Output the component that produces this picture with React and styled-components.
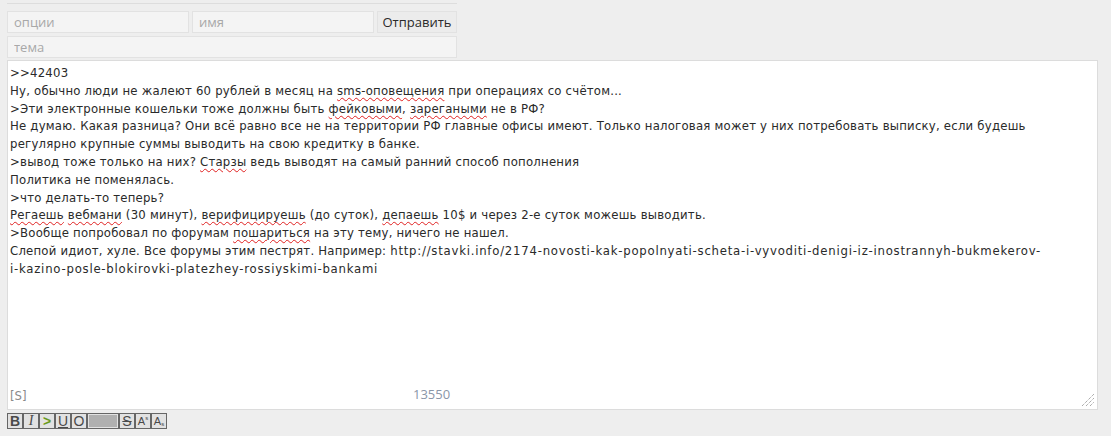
import React from 'react';
import styled, { createGlobalStyle } from 'styled-components';

const GlobalStyle = createGlobalStyle`
  html, body {
    margin: 0;
    padding: 0;
    background: #eeeeee;
  }
  body {
    font-family: 'Open Sans', 'Liberation Sans', sans-serif;
  }
`;

const Page = styled.div`
  padding: 3px 0 0 7px;
`;

const Head = styled.div`
  width: 450px;
  border-top: 1px solid #dddddd;
  padding-top: 7px;
  display: flex;
  flex-direction: column;
  gap: 3px;
`;

const Row = styled.div`
  display: flex;
  gap: 3px;
`;

const Field = styled.input`
  box-sizing: border-box;
  width: ${(p) => p.w}px;
  height: 22px;
  margin: 0;
  padding: 0 6px;
  border: 1px solid #e2e2e2;
  background: #f4f4f4;
  font-family: 'Open Sans', 'Liberation Sans', sans-serif;
  font-size: 13px;
  color: #333;
  outline: none;
  &::placeholder {
    color: #a8a8a8;
  }
`;

const Send = styled.button`
  box-sizing: border-box;
  width: 80px;
  height: 22px;
  margin: 0;
  padding: 0;
  border: 1px solid #e2e2e2;
  background: #ececec;
  font-family: 'Open Sans', 'Liberation Sans', sans-serif;
  font-size: 13px;
  color: #2a2a2a;
`;

const Box = styled.div`
  position: relative;
  box-sizing: border-box;
  width: 1091px;
  height: 350px;
  margin-top: 2px;
  border: 1px solid #dcdcdc;
  background: #ffffff;
  padding: 3px 2px;
`;

const Body = styled.div`
  font-family: 'DejaVu Sans Condensed', 'DejaVu Sans', sans-serif;
  font-size: 13px;
  line-height: 17.8px;
  letter-spacing: 0.22px;
  color: #2a2a2a;
  white-space: pre-wrap;
`;

const Url = styled.span`
  letter-spacing: 0.76px;
`;

const Typo = styled.span`
  text-decoration: underline wavy #e02020;
  text-decoration-thickness: 1px;
  text-underline-offset: 2px;
`;

const Tag = styled.span`
  position: absolute;
  bottom: 6px;
  left: ${(p) => p.x}px;
  font-family: ${(p) => (p.mono ? "'DejaVu Sans Condensed', sans-serif" : "'Open Sans', 'Liberation Sans', sans-serif")};
  font-size: 13px;
  color: ${(p) => p.c};
`;

const Grip = styled.svg`
  position: absolute;
  right: 2px;
  bottom: 2px;
`;

const Toolbar = styled.div`
  display: flex;
  margin-top: 3px;
`;

const Tool = styled.div`
  box-sizing: border-box;
  flex: 0 0 ${(p) => p.w || 16}px;
  display: flex;
  align-items: center;
  justify-content: center;
  width: ${(p) => p.w || 16}px;
  height: 16px;
  border: 1px solid #666;
  background: #e2e2e2;
  font-family: 'Liberation Sans', sans-serif;
  font-size: 14px;
  line-height: 1;
  color: #4a4a4a;
  overflow: hidden;
`;

const Gray = styled.span`
  width: 28px;
  height: 12px;
  background: #b0b0b0;
`;

const Small = styled.span`
  font-size: 6px;
  line-height: 1;
  align-self: ${(p) => (p.up ? 'flex-start' : 'flex-end')};
  margin-${(p) => (p.up ? 'top' : 'bottom')}: 1px;
`;

function App() {
  return (
    <Page>
      <GlobalStyle />
      <Head>
        <Row>
          <Field w={182} placeholder="опции" />
          <Field w={182} placeholder="имя" />
          <Send>Отправить</Send>
        </Row>
        <Row>
          <Field w={450} placeholder="тема" />
        </Row>
      </Head>
      <Box>
        <Body>
          {'>>42403\nНу, обычно люди не жалеют 60 рублей в месяц на '}
          <Typo>sms-оповещения</Typo>
          {' при операциях со счётом...\n>Эти электронные кошельки тоже должны быть '}
          <Typo>фейковыми</Typo>
          {', '}
          <Typo>зарегаными</Typo>
          {' не в РФ?\nНе думаю. Какая разница? Они всё равно все не на территории РФ главные офисы имеют. Только налоговая может у них потребовать выписку, если будешь\nрегулярно крупные суммы выводить на свою кредитку в банке.\n>вывод тоже только на них? '}
          <Typo>Старзы</Typo>
          {' ведь выводят на самый ранний способ пополнения\nПолитика не поменялась.\n>что делать-то теперь?\n'}
          <Typo>Регаешь</Typo>
          {' '}
          <Typo>вебмани</Typo>
          {' (30 минут), '}
          <Typo>верифицируешь</Typo>
          {' (до суток), '}
          <Typo>депаешь</Typo>
          {' 10$ и через 2-е суток можешь выводить.\n>Вообще попробовал по форумам '}
          <Typo>пошариться</Typo>
          {' на эту тему, ничего не нашел.\nСлепой идиот, хуле. Все форумы этим пестрят. Например: '}
          <Url>
            {'http://stavki.info/2174-novosti-kak-popolnyati-scheta-i-vyvoditi-denigi-iz-inostrannyh-bukmekerov-\ni-kazino-posle-blokirovki-platezhey-rossiyskimi-bankami'}
          </Url>
        </Body>
        <Tag x={2} c="#8a8a8a" mono>[S]</Tag>
        <Tag x={405} c="#8a96a8">13550</Tag>
        <Grip width="14" height="14" viewBox="0 0 14 14">
          <g stroke="#888" strokeWidth="1" strokeDasharray="1 1">
            <line x1="1" y1="13" x2="13" y2="1" />
            <line x1="5" y1="13" x2="13" y2="5" />
            <line x1="9" y1="13" x2="13" y2="9" />
          </g>
        </Grip>
      </Box>
      <Toolbar>
        <Tool style={{ fontWeight: 700 }}>B</Tool>
        <Tool style={{ fontFamily: "'Liberation Serif', serif", fontStyle: 'italic' }}>I</Tool>
        <Tool style={{ color: '#6a9a1e', fontWeight: 700 }}>&gt;</Tool>
        <Tool style={{ textDecoration: 'underline' }}>U</Tool>
        <Tool style={{ textDecoration: 'overline' }}>O</Tool>
        <Tool w={32}><Gray /></Tool>
        <Tool style={{ textDecoration: 'line-through' }}>S</Tool>
        <Tool style={{ fontSize: 11 }}>A<Small up>s</Small></Tool>
        <Tool style={{ fontSize: 11 }}>A<Small>s</Small></Tool>
      </Toolbar>
    </Page>
  );
}

export default App;
